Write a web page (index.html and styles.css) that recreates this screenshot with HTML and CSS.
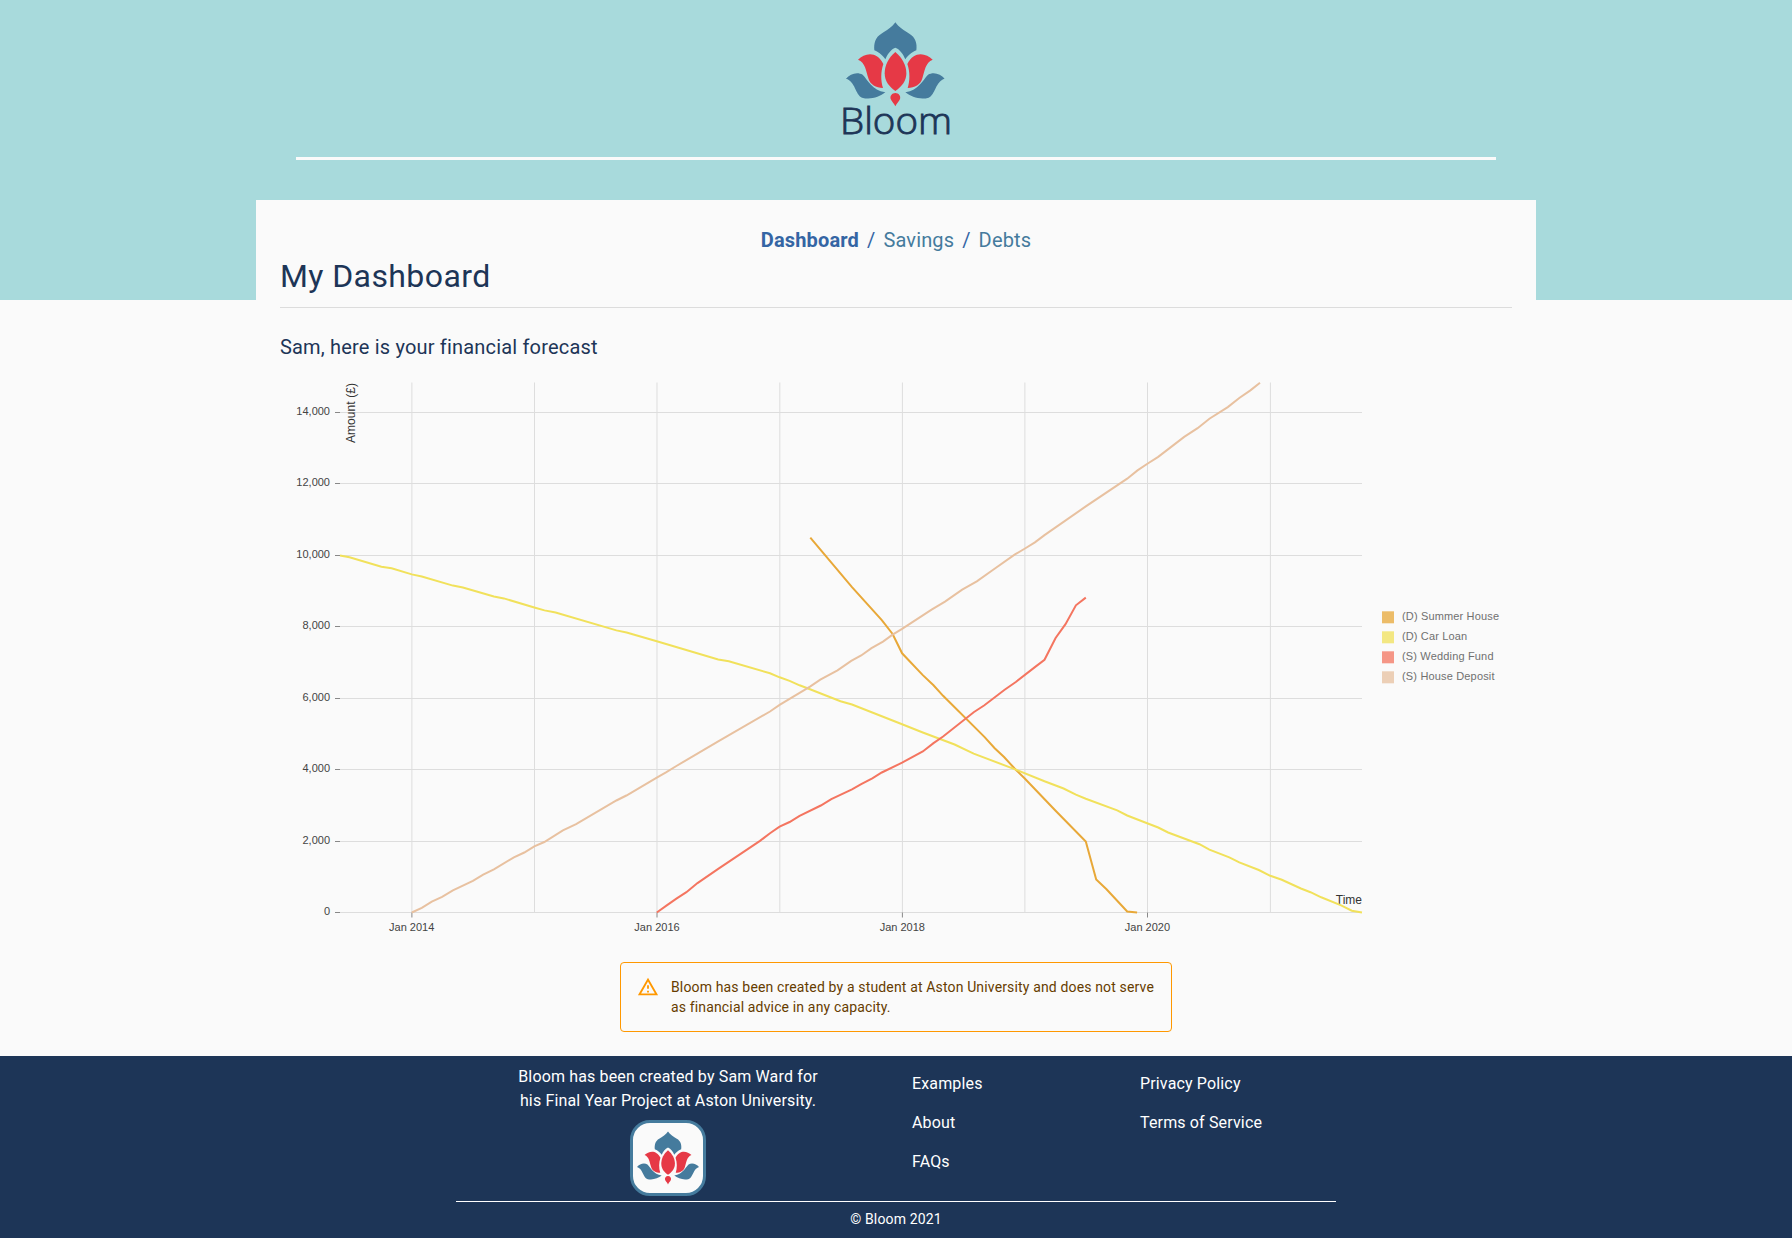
FILE: index.html
```html
<!DOCTYPE html>
<html lang="en">
<head>
<meta charset="utf-8">
<title>Bloom</title>
<link rel="stylesheet" href="styles.css">
</head>
<body>
<svg class="defs" width="0" height="0" aria-hidden="true">
  <symbol id="lotus" viewBox="78 36 296 254">
    <path fill="#457b9d" d="M226 37C234 50 254 63 268 71C286 81 292 100 289 121C275 127 262 138 256 148C250 134 240 118 226 113C212 118 202 134 196 148C190 138 177 127 163 121C161 100 166 81 184 71C198 63 218 50 226 37Z"/>
    <g id="side">
      <path fill="#e63946" d="M114 149C134 129 170 121 190 162C182 185 182 212 189 234C168 234 150 224 145 205C138 182 136 158 114 149Z"/>
      <path fill="#457b9d" d="M78 206C90 191 112 184 128 194C145 212 155 239 196 247C178 262 150 270 126 263C106 254 106 214 78 206Z"/>
    </g>
    <use href="#side" transform="translate(452 0) scale(-1 1)"/>
    <path fill="#e63946" d="M226 126C206 143 194 165 194 190C194 212 206 230 226 243C246 230 259 212 259 190C259 165 246 143 226 126Z"/>
    <path fill="#e63946" d="M226 249C236 249 243 258 240 267C237 275 230 280 226 289C222 280 215 275 212 267C209 258 216 249 226 249Z"/>
  </symbol>
</svg>

<header class="banner">
  <div class="banner-inner">
    <svg class="logo" width="110" height="124" viewBox="0 0 110 124" role="img" aria-label="Bloom">
      <use href="#lotus" x="5" y="4" width="98.7" height="84.7"/>
      <text class="logo-text" x="-1" y="116.3" textLength="112" lengthAdjust="spacingAndGlyphs">Bloom</text>
    </svg>
  </div>
</header>

<main class="card">
  <nav class="crumbs"><a class="current">Dashboard</a><span>/</span><a>Savings</a><span>/</span><a>Debts</a></nav>
  <h1>My Dashboard</h1>
  <h2>Sam, here is your financial forecast</h2>

  <svg class="chart" width="1232" height="574" viewBox="280 370 1232 574">
    <path class="grid" d="M340 412.5H1362M340 483.5H1362M340 555.5H1362M340 626.5H1362M340 698.5H1362M340 769.5H1362M340 841.5H1362M340 912.5H1362M411.9 382.5V912.5M534.5 382.5V912.5M657 382.5V912.5M779.8 382.5V912.5M902.4 382.5V912.5M1024.9 382.5V912.5M1147.5 382.5V912.5M1270.4 382.5V912.5"/>
    <path class="tick" d="M335 412.5H340M335 483.5H340M335 555.5H340M335 626.5H340M335 698.5H340M335 769.5H340M335 841.5H340M335 912.5H340M411.9 912.5V917.5M657 912.5V917.5M902.4 912.5V917.5M1147.5 912.5V917.5"/>
    <g class="labels end">
      <text x="330" y="415">14,000</text><text x="330" y="486">12,000</text><text x="330" y="558">10,000</text><text x="330" y="629">8,000</text><text x="330" y="701">6,000</text><text x="330" y="772">4,000</text><text x="330" y="844">2,000</text><text x="330" y="915">0</text>
    </g>
    <g class="labels middle">
      <text x="411.7" y="931">Jan 2014</text><text x="657" y="931">Jan 2016</text><text x="902.3" y="931">Jan 2018</text><text x="1147.4" y="931">Jan 2020</text>
    </g>
    <text class="axis-title" transform="translate(355 443) rotate(-90)" textLength="60">Amount (£)</text>
    <text class="axis-title end" x="1362" y="904">Time</text>
    <polyline class="line" stroke="#e8a838" points="810.3,537.6 852,587.1 881.8,620.2 892.6,634 902.1,653.3 922.8,675.1 933.5,685.3 943.1,695.8 984.4,736.9 994.7,748.2 1004.3,757.3 1014.6,768.5 1025,778.7 1055.6,810.7 1085.8,841.6 1096.2,879.5 1106.5,889.3 1127.2,911.5 1137.1,912.5"/>
    <polyline class="line" stroke="#f1e15b" points="340,555.5 349.5,557.3 381.4,566.7 391.6,568.2 411.8,574.4 421.8,576.5 452.9,585.6 462.9,587.5 493.9,596.5 503.9,598.4 534.3,607.5 544.5,610.4 555.6,612.5 616.4,630.4 626.6,632.5 656.8,641.3 718.2,659.5 728.8,661.3 770,673.3 779.6,677.3 789.6,680.9 799.6,685.3 810,689.3 840.5,701.3 852,704.5 902.1,724.2 922.8,732.5 954.6,744.5 973.7,753.6 1015.8,769.6 1044.5,781.3 1063.6,788.5 1075.9,794.7 1085.8,798.7 1117.2,810.4 1127.2,815.5 1147.8,823.5 1158.2,827.5 1168.1,832.5 1199.5,844.2 1209.4,849.6 1229.3,857.3 1239.3,862.4 1258.8,870 1270.3,875.8 1281.8,879.8 1300.9,888.5 1310.5,892.2 1321.2,897.3 1341.1,905.3 1351.8,910.7 1362,912.5"/>
    <polyline class="line" stroke="#f47560" points="656.8,912.5 666.4,905.6 676.4,898.7 686.4,892.2 697.5,883.1 718.2,868.9 760,840.9 770,833.3 779.6,826.7 789.6,822 799.6,815.8 820.8,805.5 831.3,799.1 852,789.3 861.2,784.2 872.3,778.4 881.8,772.5 902.1,762.7 922.8,751.5 933.5,743.1 943.1,736.5 973.7,712.2 984.4,705.3 1004.3,690 1015.8,682 1034.9,667.1 1044.5,659.8 1055.6,638 1065.5,624.2 1075.9,605.3 1085.8,597.6"/>
    <polyline class="line" stroke="#e8c1a0" points="411.8,912.5 421.8,907.8 431.8,901.6 442.1,896.9 452.9,890.4 472.9,880.9 483.2,874.7 493.9,869.3 513.9,857.3 524.3,852.5 534.3,846.4 544.3,842 562.9,830.4 576.1,824.2 616.4,800.5 626.4,795.5 656.8,777.6 666.4,772.2 676.4,766 718.2,741.3 770,711.5 779.6,704.9 810,686.7 820.3,679.7 837.5,670.4 851.2,660.9 861.2,655.5 871.5,648.2 883,641.6 892.6,634.7 902.1,628.9 931.6,609.6 945,601.6 962.2,589.6 976.8,581.3 992.8,570 1014.6,554.7 1025,548.5 1034.9,542.4 1044.5,535.1 1085.8,506.4 1127.2,478.7 1137.5,470.4 1147.8,463.5 1158.2,456.9 1184.2,436.9 1197.6,428.2 1209.4,418.7 1227.8,407.1 1239.3,398 1250.4,390.4 1260,382.7"/>
    <g class="swatches">
      <rect x="1382" y="611.3" width="12" height="12" fill="#e8a838"/><rect x="1382" y="631.3" width="12" height="12" fill="#f1e15b"/><rect x="1382" y="651.3" width="12" height="12" fill="#f47560"/><rect x="1382" y="671.3" width="12" height="12" fill="#e8c1a0"/>
    </g>
    <g class="labels legend">
      <text x="1402" y="620" textLength="97">(D) Summer House</text><text x="1402" y="640" textLength="65">(D) Car Loan</text><text x="1402" y="660" textLength="91.5">(S) Wedding Fund</text><text x="1402" y="680" textLength="92.5">(S) House Deposit</text>
    </g>
  </svg>

  <div class="alert">
    <svg width="22" height="22" viewBox="0 0 24 24"><path fill="#ff9800" d="M12 5.99L19.53 19H4.47L12 5.99M12 2L1 21h22L12 2zm1 14h-2v2h2v-2zm0-6h-2v4h2v-4z"/></svg>
    <p>Bloom has been created by a student at Aston University and does not serve as financial advice in any capacity.</p>
  </div>
</main>

<footer>
  <div class="footer-grid">
    <div class="about">
      <p>Bloom has been created by Sam Ward for<br>his Final Year Project at Aston University.</p>
      <div class="badge"><svg width="62" height="54"><use href="#lotus" width="62" height="54"/></svg></div>
    </div>
    <div class="links"><a>Examples</a><a>About</a><a>FAQs</a></div>
    <div class="links"><a>Privacy Policy</a><a>Terms of Service</a></div>
  </div>
  <p class="copyright">© Bloom 2021</p>
</footer>
</body>
</html>
```
FILE: styles.css
```css
* { box-sizing: border-box; }
body {
  margin: 0;
  background: #fafafa;
  color: #1d3557;
  font-family: Roboto, "Liberation Sans", sans-serif;
  letter-spacing: 0.00938em;
}
h1, h2, p { margin: 0; font-weight: 400; }
svg { display: block; flex: none; }
.defs { position: absolute; }

.banner { height: 300px; background: #a8dadc; }
.banner-inner {
  width: 1200px;
  height: 160px;
  margin: 0 auto;
  padding-top: 18px;
  border-bottom: 3px solid #fafafa;
}
.logo { margin: 0 auto; overflow: visible; }
.logo-text {
  font-family: "Open Sans", "Noto Sans", sans-serif;
  font-size: 37.5px;
  font-weight: 300;
  letter-spacing: 0;
  fill: #1d3557;
  stroke: #1d3557;
  stroke-width: 0.9px;
}

.card {
  width: 1280px;
  height: 856px;
  margin: -100px auto 0;
  padding: 25px 24px 0;
  background: #fafafa;
}
.crumbs {
  display: flex;
  justify-content: center;
  gap: 8px;
  font-size: 20px;
  line-height: 30px;
  letter-spacing: 0.15px;
  color: #457b9d;
}
.crumbs span { color: #3465a4; }
.crumbs .current { font-weight: 700; color: #3465a4; }
h1 {
  height: 53px;
  border-bottom: 1px solid #dcdcdc;
  font-size: 32px;
  line-height: 42px;
  letter-spacing: 0.4px;
}
h2 {
  padding-top: 23px;
  height: 62px;
  font-size: 20px;
  line-height: 32px;
  letter-spacing: 0.18px;
}

.chart { font-family: "Liberation Sans", Arial, sans-serif; letter-spacing: 0; }
.grid { stroke: #ddd; fill: none; }
.tick { stroke: #888; fill: none; }
.labels { font-size: 11px; fill: #444; }
.end { text-anchor: end; }
.middle { text-anchor: middle; }
.axis-title { font-size: 12px; fill: #333; }
.line { fill: none; stroke-width: 2; }
.swatches { opacity: 0.75; }
.legend { fill: #707070; }

.alert {
  display: flex;
  gap: 12px;
  width: 552px;
  height: 70px;
  margin: 18px auto 0;
  padding: 13px 16px;
  border: 1px solid #ff9800;
  border-radius: 4px;
  color: #663c00;
}
.alert p { padding-top: 1px; font-size: 14px; line-height: 20px; letter-spacing: 0.15px; }

footer { height: 182px; background: #1d3557; color: #fff; }
.footer-grid {
  display: grid;
  grid-template-columns: 424px 196px 196px;
  column-gap: 32px;
  width: 880px;
  height: 146px;
  margin: 0 auto;
  padding-top: 9px;
  border-bottom: 1px solid #fff;
}
.about { display: flex; flex-direction: column; align-items: center; text-align: center; }
.about p { line-height: 24px; }
.badge {
  display: grid;
  place-items: center;
  width: 76px;
  height: 76px;
  margin-top: 7px;
  border: 3px solid #457b9d;
  border-radius: 20px;
  background: #fafafa;
}
.links { display: flex; flex-direction: column; gap: 15px; padding-top: 7px; line-height: 24px; }
.copyright { padding-top: 7px; text-align: center; font-size: 14px; line-height: 20px; letter-spacing: 0.15px; }
```
